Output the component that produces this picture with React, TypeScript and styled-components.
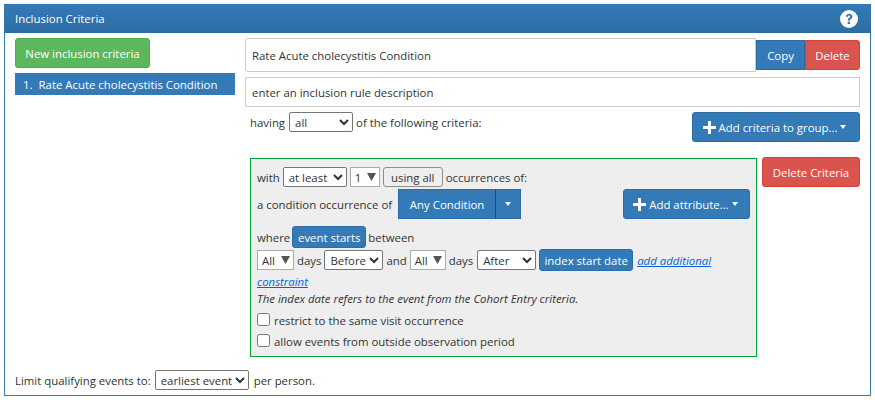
import React from 'react';
import styled, { createGlobalStyle, css } from 'styled-components';

const GlobalStyle = createGlobalStyle`
  html, body {
    margin: 0;
    padding: 0;
    background: #fff;
  }
  body {
    font-family: "Open Sans", "Noto Sans", sans-serif;
    font-size: 11.4px;
    color: #333;
  }
  * {
    box-sizing: border-box;
  }
`;

const Panel = styled.div`
  width: 867px;
  height: 392px;
  margin: 4px;
  border: 1px solid #337ab7;
  border-top: none;
  display: flex;
  flex-direction: column;
`;

const PanelHeader = styled.div`
  height: 29px;
  margin: 0 -1px;
  padding: 0 13px 0 11px;
  display: flex;
  align-items: center;
  justify-content: space-between;
  color: #fff;
  background: linear-gradient(to bottom, #337ab7 0%, #2e6da4 100%);
`;

const PanelBody = styled.div`
  flex: 1;
  display: flex;
  gap: 10px;
  padding: 5px 10px 0;
`;

const LeftColumn = styled.div`
  width: 220px;
  display: flex;
  flex-direction: column;
  align-items: flex-start;
  gap: 5px;
`;

const RightColumn = styled.div`
  width: 615px;
  display: flex;
  flex-direction: column;
`;

const Button = styled.button<{ $variant: 'green' | 'blue' | 'red' }>`
  display: inline-flex;
  align-items: center;
  justify-content: center;
  gap: 3px;
  height: 30px;
  padding: 0;
  border-radius: 3px;
  color: #fff;
  font: inherit;
  white-space: nowrap;
  ${({ $variant }) =>
    $variant === 'green' &&
    css`
      background: #5cb85c;
      border: 1px solid #4cae4c;
    `}
  ${({ $variant }) =>
    $variant === 'blue' &&
    css`
      background: #337ab7;
      border: 1px solid #2e6da4;
    `}
  ${({ $variant }) =>
    $variant === 'red' &&
    css`
      background: #d9534f;
      border: 1px solid #d43f3a;
    `}
`;

const NewButton = styled(Button)`
  width: 135px;
`;

const ListItem = styled.div`
  width: 100%;
  height: 22px;
  padding: 0 0 0 8px;
  display: flex;
  align-items: center;
  gap: 6px;
  background: #337ab7;
  color: #fff;
`;

const NameRow = styled.div`
  display: flex;
  align-items: center;
  height: 34px;
`;

const TextInput = styled.input<{ $height: number }>`
  height: ${({ $height }) => $height}px;
  padding: 0 6px;
  border: 1px solid #ccc;
  font: inherit;
  color: #333;
  background: #fff;
  &::placeholder {
    color: #333;
    opacity: 1;
  }
`;

const NameInput = styled(TextInput)`
  width: 511px;
  border-radius: 3px 0 0 3px;
`;

const DescriptionInput = styled(TextInput)`
  width: 100%;
  margin-top: 5px;
`;

const CopyButton = styled(Button)`
  width: 49px;
  border-radius: 0;
`;

const DeleteButton = styled(Button)`
  width: 55px;
  border-radius: 0 3px 3px 0;
`;

const HavingRow = styled.div`
  margin-top: 5px;
  padding-left: 5px;
  height: 45px;
  display: flex;
  align-items: flex-start;
  justify-content: space-between;
`;

const Inline = styled.div<{ $gap?: number }>`
  display: flex;
  align-items: center;
  gap: ${({ $gap }) => $gap ?? 3}px;
  white-space: nowrap;
`;

const Select = styled.select<{ $width: number; $offset?: number }>`
  width: ${({ $width }) => $width}px;
  height: 20px;
  margin-left: ${({ $offset }) => $offset ?? 0}px;
  padding: 0 0 0 1px;
  font: inherit;
  color: #333;
  background-color: #fff;
  border: 1px solid #767676;
  border-radius: 2px;
`;

const FakeSelect = styled.span<{ $width: number }>`
  width: ${({ $width }) => $width}px;
  height: 20px;
  padding: 0 3px 0 4px;
  display: inline-flex;
  align-items: center;
  justify-content: space-between;
  background: #fff;
  border: 1px solid #ababab;
  color: #333;
`;

const Arrow = styled.svg`
  width: 9px;
  height: 8px;
  fill: #555;
`;

const AddCriteriaButton = styled(Button)`
  width: 168px;
  padding-right: 3px;
`;

const CriteriaRow = styled.div`
  display: flex;
  align-items: flex-start;
  gap: 5px;
`;

const CriteriaBox = styled.div`
  width: 507px;
  height: 199px;
  margin: 1px 0 0 5px;
  padding: 8px 6px 0;
  border: 1px solid #00a632;
  background: #eee;
  display: flex;
  flex-direction: column;
`;

const ConditionRow = styled.div`
  display: flex;
  justify-content: space-between;
  margin-top: 2px;
  height: 30px;
  align-items: center;
`;

const SplitButton = styled.div`
  display: flex;
  margin-left: 3px;
`;

const SplitMain = styled.div`
  width: 98px;
  height: 30px;
  background: #337ab7;
  border: 1px solid #2e6da4;
  color: #fff;
  display: flex;
  align-items: center;
  justify-content: center;
`;

const SplitCaret = styled(SplitMain)`
  width: 26px;
  border-left: 1px solid #204d74;
  margin-left: -1px;
`;

const Caret = styled.span`
  display: inline-block;
  width: 0;
  height: 0;
  border-left: 3.5px solid transparent;
  border-right: 3.5px solid transparent;
  border-top: 4px solid #fff;
`;

const AddAttributeButton = styled(Button)`
  width: 127px;
  padding-right: 2px;
`;

const WhereRow = styled(Inline)`
  margin-top: 7px;
  height: 22px;
`;

const SmallBlueButton = styled.span<{ $width: number }>`
  width: ${({ $width }) => $width}px;
  height: 22px;
  display: inline-flex;
  align-items: center;
  justify-content: center;
  background: #337ab7;
  border: 1px solid #2e6da4;
  border-radius: 3px;
  color: #fff;
`;

const GrayButton = styled.span`
  width: 60px;
  height: 20px;
  display: inline-flex;
  align-items: center;
  justify-content: center;
  background: #eee;
  border: 1px solid #8e8e8e;
  border-radius: 3px;
`;

const DaysRow = styled(Inline)`
  margin-top: 1px;
  height: 22px;
`;

const LinkText = styled.a`
  color: #0563d6;
  font-style: italic;
  text-decoration: underline;
`;

const ExtraLink = styled(LinkText)`
  margin-left: 1px;
`;

const ConstraintLine = styled.div`
  margin-top: 3px;
  height: 16px;
  line-height: 16px;
`;

const Note = styled.div`
  height: 17px;
  line-height: 17px;
  font-style: italic;
`;

const CheckRow = styled.label<{ $top: number }>`
  margin-top: ${({ $top }) => $top}px;
  height: 14px;
  display: flex;
  align-items: center;
  gap: 4px;
`;

const Check = styled.input`
  width: 13px;
  height: 13px;
  margin: 0 0 2px;
`;

const DeleteCriteriaButton = styled(Button)`
  width: 98px;
`;

const LimitRow = styled(Inline)`
  margin: auto 0 5px 10px;
  height: 20px;
`;

const PerPerson = styled.span`
  margin-left: 2px;
`;

const HelpIcon = () => (
  <svg width="18" height="18" viewBox="0 0 18 18" aria-hidden="true">
    <circle cx="9" cy="9" r="9" fill="#fff" />
    <path
      d="M5.9 6.6C6 4.8 7.3 3.7 9.2 3.7c1.9 0 3.2 1.1 3.2 2.7 0 1.2-.6 1.9-1.6 2.5-.7.5-.9.8-.9 1.5v.3H7.8v-.5c0-1.1.4-1.7 1.2-2.2.7-.5 1-.8 1-1.4 0-.6-.4-1-1-1-.6 0-1 .4-1.1 1.1H5.9zM7.7 11.7h2.3V14H7.7z"
      fill="#337ab7"
    />
  </svg>
);

const PlusIcon = () => (
  <svg width="13" height="13" viewBox="0 0 13 13" aria-hidden="true">
    <path d="M5 0h3v5h5v3H8v5H5V8H0V5h5z" fill="#fff" />
  </svg>
);

const DownArrow = () => (
  <Arrow viewBox="0 0 9 8">
    <path d="M0 0h9L4.5 8z" />
  </Arrow>
);

export default function App() {
  return (
    <>
      <GlobalStyle />
      <Panel>
        <PanelHeader>
          <span>Inclusion Criteria</span>
          <HelpIcon />
        </PanelHeader>
        <PanelBody>
          <LeftColumn>
            <NewButton $variant="green">New inclusion criteria</NewButton>
            <ListItem>
              <span>1.</span>
              <span>Rate Acute cholecystitis Condition</span>
            </ListItem>
          </LeftColumn>
          <RightColumn>
            <NameRow>
              <NameInput $height={34} defaultValue="Rate Acute cholecystitis Condition" />
              <CopyButton $variant="blue">Copy</CopyButton>
              <DeleteButton $variant="red">Delete</DeleteButton>
            </NameRow>
            <DescriptionInput $height={30} placeholder="enter an inclusion rule description" />
            <HavingRow>
              <Inline>
                having
                <Select $width={64} $offset={1} defaultValue="all">
                  <option value="all">all</option>
                </Select>
                of the following criteria:
              </Inline>
              <AddCriteriaButton $variant="blue">
                <PlusIcon />
                Add criteria to group...
                <Caret />
              </AddCriteriaButton>
            </HavingRow>
            <CriteriaRow>
              <CriteriaBox>
                <Inline>
                  with
                  <Select $width={64} defaultValue="at least">
                    <option>at least</option>
                  </Select>
                  <FakeSelect $width={30}>
                    1<DownArrow />
                  </FakeSelect>
                  <GrayButton>using all</GrayButton>
                  occurrences of:
                </Inline>
                <ConditionRow>
                  <Inline>
                    a condition occurrence of
                    <SplitButton>
                      <SplitMain>Any Condition</SplitMain>
                      <SplitCaret>
                        <Caret />
                      </SplitCaret>
                    </SplitButton>
                  </Inline>
                  <AddAttributeButton $variant="blue">
                    <PlusIcon />
                    Add attribute...
                    <Caret />
                  </AddAttributeButton>
                </ConditionRow>
                <WhereRow $gap={2}>
                  where
                  <SmallBlueButton $width={74}>event starts</SmallBlueButton>
                  between
                </WhereRow>
                <DaysRow>
                  <FakeSelect $width={37}>
                    All
                    <DownArrow />
                  </FakeSelect>
                  days
                  <Select $width={59} defaultValue="Before">
                    <option>Before</option>
                  </Select>
                  and
                  <FakeSelect $width={36}>
                    All
                    <DownArrow />
                  </FakeSelect>
                  days
                  <Select $width={59} $offset={1} defaultValue="After">
                    <option>After</option>
                  </Select>
                  <SmallBlueButton $width={94}>index start date</SmallBlueButton>
                  <ExtraLink href="#">add additional</ExtraLink>
                </DaysRow>
                <ConstraintLine>
                  <LinkText href="#">constraint</LinkText>
                </ConstraintLine>
                <Note>The index date refers to the event from the Cohort Entry criteria.</Note>
                <CheckRow $top={6}>
                  <Check type="checkbox" />
                  restrict to the same visit occurrence
                </CheckRow>
                <CheckRow $top={7}>
                  <Check type="checkbox" />
                  allow events from outside observation period
                </CheckRow>
              </CriteriaBox>
              <DeleteCriteriaButton $variant="red">Delete Criteria</DeleteCriteriaButton>
            </CriteriaRow>
          </RightColumn>
        </PanelBody>
        <LimitRow>
          Limit qualifying events to:
          <Select $width={94} $offset={1} defaultValue="earliest event">
            <option>earliest event</option>
          </Select>
          <PerPerson>per person.</PerPerson>
        </LimitRow>
      </Panel>
    </>
  );
}
